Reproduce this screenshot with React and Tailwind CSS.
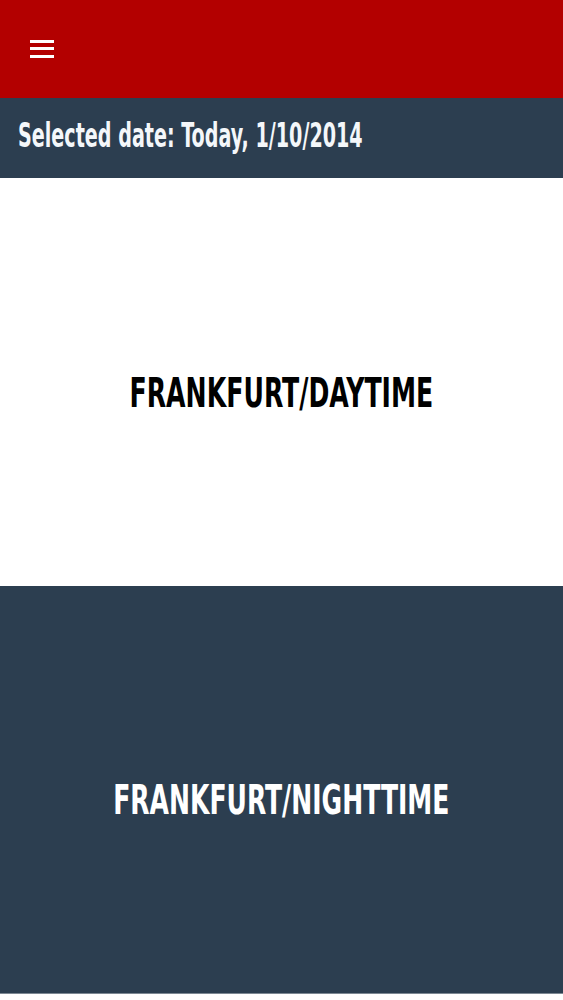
import React from "react";

const font = { fontFamily: '"DejaVu Sans Condensed", "DejaVu Sans", sans-serif' };

export default function App() {
  return (
    <div className="w-[563px] bg-white" style={font}>
      <header className="h-[98px] bg-[#b30000] flex items-center px-[30px] pb-[1px]">
        <div className="flex flex-col gap-[4.5px] w-[24px]">
          <span className="block h-[3px] bg-white" />
          <span className="block h-[3px] bg-white" />
          <span className="block h-[3px] bg-white" />
        </div>
      </header>
      <div className="h-[80px] bg-[#2c3e50] flex items-center px-[18px] pb-[6px]">
        <span className="inline-block origin-left scale-x-[0.645] whitespace-nowrap text-[#f4f7fa] text-[33px] font-bold leading-none">
          Selected date: Today, 1/10/2014
        </span>
      </div>
      <section className="h-[408px] bg-white flex items-center justify-center pt-[22px]">
        <span className="inline-block scale-x-[0.683] whitespace-nowrap text-black text-[41px] font-bold leading-none">
          FRANKFURT/DAYTIME
        </span>
      </section>
      <section className="h-[408px] bg-[#2c3e50] flex items-center justify-center pt-[22px] border-b border-[#7d8893]">
        <span className="inline-block scale-x-[0.68] whitespace-nowrap text-white text-[41px] font-bold leading-none">
          FRANKFURT/NIGHTTIME
        </span>
      </section>
    </div>
  );
}
